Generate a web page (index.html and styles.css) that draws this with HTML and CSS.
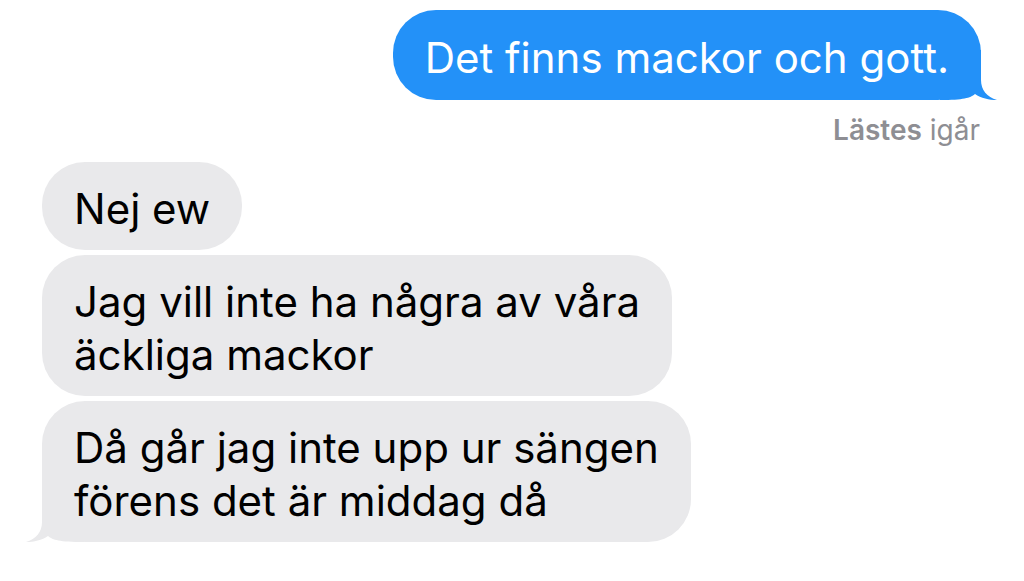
FILE: index.html
```html
<!DOCTYPE html>
<html lang="sv">
<head>
<meta charset="utf-8">
<title>Meddelanden</title>
<link rel="stylesheet" href="styles.css">
</head>
<body>
<main class="chat">
  <div class="row row-out">
    <div class="bubble bubble-out"><span class="msg">Det finns mackor och gott.</span><svg class="tail tail-out" width="60" height="50" viewBox="0 0 60 50"><path d="M41,0 L41,30 C41,40 47,47 57,50 C49,50 41,48 35,44 C30,48 24,50 0,50 L0,0 Z"/></svg></div>
  </div>
  <div class="receipt"><span class="receipt-strong">Lästes</span> igår</div>
  <div class="group-in">
    <div class="row"><div class="bubble bubble-in"><span class="msg">Nej ew</span></div></div>
    <div class="row"><div class="bubble bubble-in"><span class="msg">Jag vill inte ha några av våra<br>äckliga mackor</span></div></div>
    <div class="row"><div class="bubble bubble-in"><span class="msg">Då går jag inte upp ur sängen<br>förens det är middag då</span><svg class="tail tail-in" width="60" height="50" viewBox="0 0 60 50"><path d="M18,0 L18,30 C18,40 12,47 2,50 C10,50 18,48 24,44 C29,48 35,50 60,50 L60,0 Z"/></svg></div></div>
  </div>
</main>
</body>
</html>
```

FILE: styles.css
```css
html, body {
  margin: 0;
  padding: 0;
  background: #ffffff;
}

body {
  font-family: Inter, "Liberation Sans", Arial, sans-serif;
  font-feature-settings: "calt" 0, "liga" 0;
  font-variant-ligatures: none;
  width: 1024px;
  height: 581px;
  overflow: hidden;
}

.chat {
  display: flex;
  flex-direction: column;
  padding: 10px 43px 0 42px;
}

.row {
  display: flex;
}

.row-out {
  justify-content: flex-end;
}

.bubble {
  position: relative;
  font-size: 42px;
  line-height: 53px;
  padding: 20px 32px 15px 32px;
  border-radius: 43px;
}

.msg {
  position: relative;
  z-index: 1;
}

.bubble-out {
  background: #2391f8;
  color: #ffffff;
  padding-top: 21px;
  padding-bottom: 16px;
}

.bubble-in {
  background: #e9e9eb;
  color: #000000;
}

.tail {
  position: absolute;
  bottom: 0;
}

.tail-out {
  right: -19px;
  fill: #2391f8;
}

.tail-in {
  left: -18px;
  fill: #e9e9eb;
}

.receipt {
  align-self: flex-end;
  margin-top: 13px;
  margin-right: 1px;
  font-size: 28px;
  line-height: 34px;
  color: #8e8e93;
}

.receipt-strong {
  font-weight: 600;
}

.group-in {
  display: flex;
  flex-direction: column;
  gap: 5px;
  margin-top: 15px;
}
```
